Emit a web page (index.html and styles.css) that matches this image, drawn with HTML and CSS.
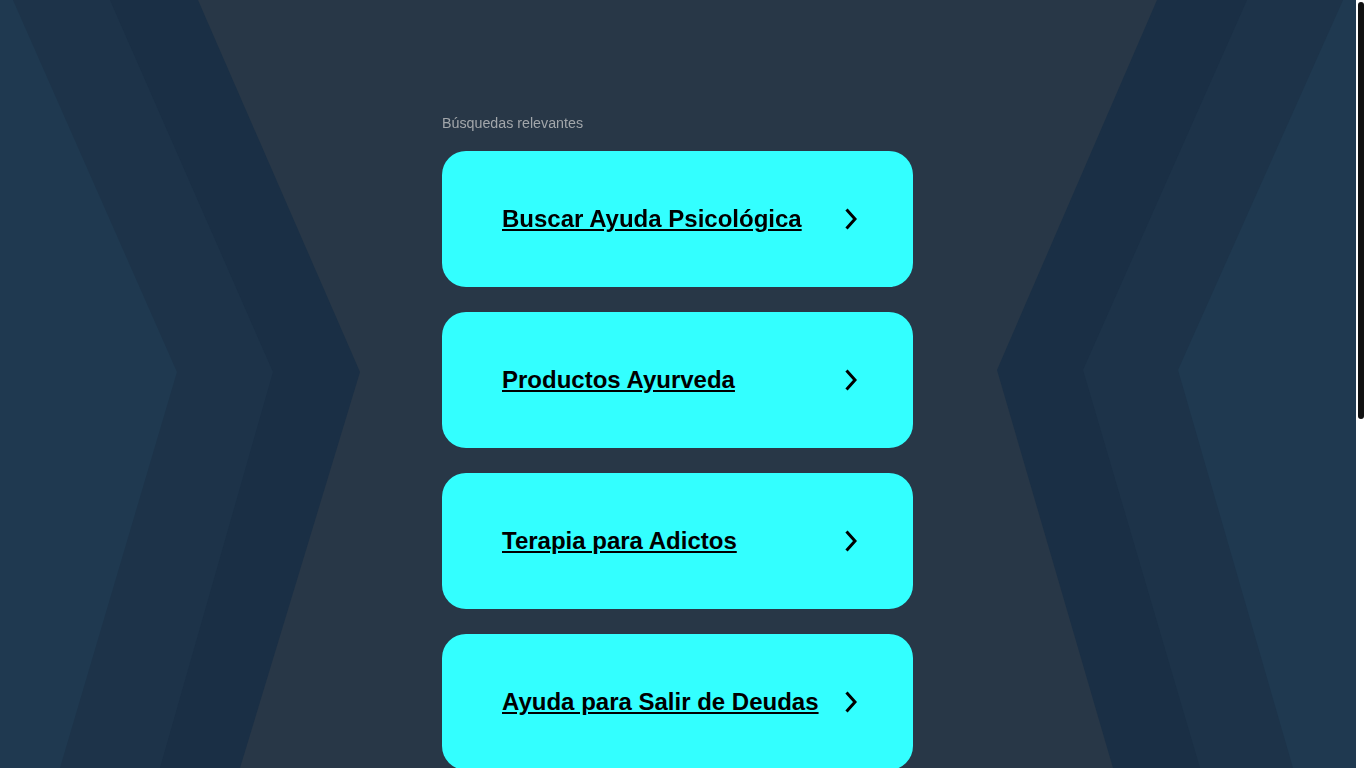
FILE: index.html
```html
<!DOCTYPE html>
<html lang="es">
<head>
<meta charset="utf-8">
<title>Búsquedas relevantes</title>
<link rel="stylesheet" href="styles.css">
</head>
<body>
<svg class="backdrop" viewBox="0 0 1356 768" preserveAspectRatio="none" aria-hidden="true">
  <polygon class="band-dark" points="0,0 198,0 360,372 240,768 0,768"/>
  <polygon class="band-mid" points="0,0 110,0 273,372 160,768 0,768"/>
  <polygon class="band-light" points="0,0 13,0 177,372 60,768 0,768"/>
  <polygon class="band-dark" points="1356,0 1157,0 997,370 1113,768 1356,768"/>
  <polygon class="band-mid" points="1356,0 1247,0 1083,370 1200,768 1356,768"/>
  <polygon class="band-light" points="1356,0 1343,0 1178,370 1293,768 1356,768"/>
</svg>
<div class="scroll-rail" aria-hidden="true"><div class="scroll-thumb"></div></div>
<main class="results">
  <p class="results-label">Búsquedas relevantes</p>
  <ul class="cards">
    <li class="card"><a class="card-link" href="#">Buscar Ayuda Psicológica</a>
      <svg class="chev" viewBox="0 0 12 22" aria-hidden="true"><polyline points="1.5,1.5 10,11 1.5,20.5"/></svg></li>
    <li class="card"><a class="card-link" href="#">Productos Ayurveda</a>
      <svg class="chev" viewBox="0 0 12 22" aria-hidden="true"><polyline points="1.5,1.5 10,11 1.5,20.5"/></svg></li>
    <li class="card"><a class="card-link" href="#">Terapia para Adictos</a>
      <svg class="chev" viewBox="0 0 12 22" aria-hidden="true"><polyline points="1.5,1.5 10,11 1.5,20.5"/></svg></li>
    <li class="card"><a class="card-link" href="#">Ayuda para Salir de Deudas</a>
      <svg class="chev" viewBox="0 0 12 22" aria-hidden="true"><polyline points="1.5,1.5 10,11 1.5,20.5"/></svg></li>
  </ul>
</main>
</body>
</html>
```
FILE: styles.css
```css
html {
  background: #283747;
}
body {
  margin: 0 11px 0 0;
  font-family: "Liberation Sans", Arial, sans-serif;
  color: #000;
}
.backdrop {
  position: fixed;
  top: 0;
  left: 0;
  width: calc(100% - 10px);
  height: 100%;
  z-index: -1;
}
.band-dark { fill: #1a2f45; }
.band-mid { fill: #1d3349; }
.band-light { fill: #1f3950; }

.scroll-rail {
  position: fixed;
  top: 0;
  right: 0;
  width: 10px;
  height: 100%;
  background: #ffffff;
  z-index: 5;
}
.scroll-thumb {
  margin: 2px 2px 0;
  height: 417px;
  background: #111111;
  border-radius: 3px;
}

.results {
  width: 471px;
  margin: 0 auto;
  padding: 115px 0 630px;
}
.results-label {
  margin: 0 0 20px;
  font-size: 14.25px;
  line-height: 16px;
  color: #a2a6aa;
}
.cards {
  list-style: none;
  margin: 0;
  padding: 0;
  display: flex;
  flex-direction: column;
  gap: 25px;
}
.card {
  height: 136px;
  box-sizing: border-box;
  padding: 0 56px 0 60px;
  background: #33ffff;
  border-radius: 24px;
  display: flex;
  align-items: center;
  justify-content: space-between;
}
.card-link {
  font-size: 24px;
  font-weight: bold;
  line-height: 28px;
  color: #000;
  text-decoration: underline;
}
.chev {
  width: 12px;
  height: 22px;
  flex: none;
}
.chev polyline {
  fill: none;
  stroke: #000;
  stroke-width: 3;
  stroke-linecap: butt;
  stroke-linejoin: miter;
}
```
